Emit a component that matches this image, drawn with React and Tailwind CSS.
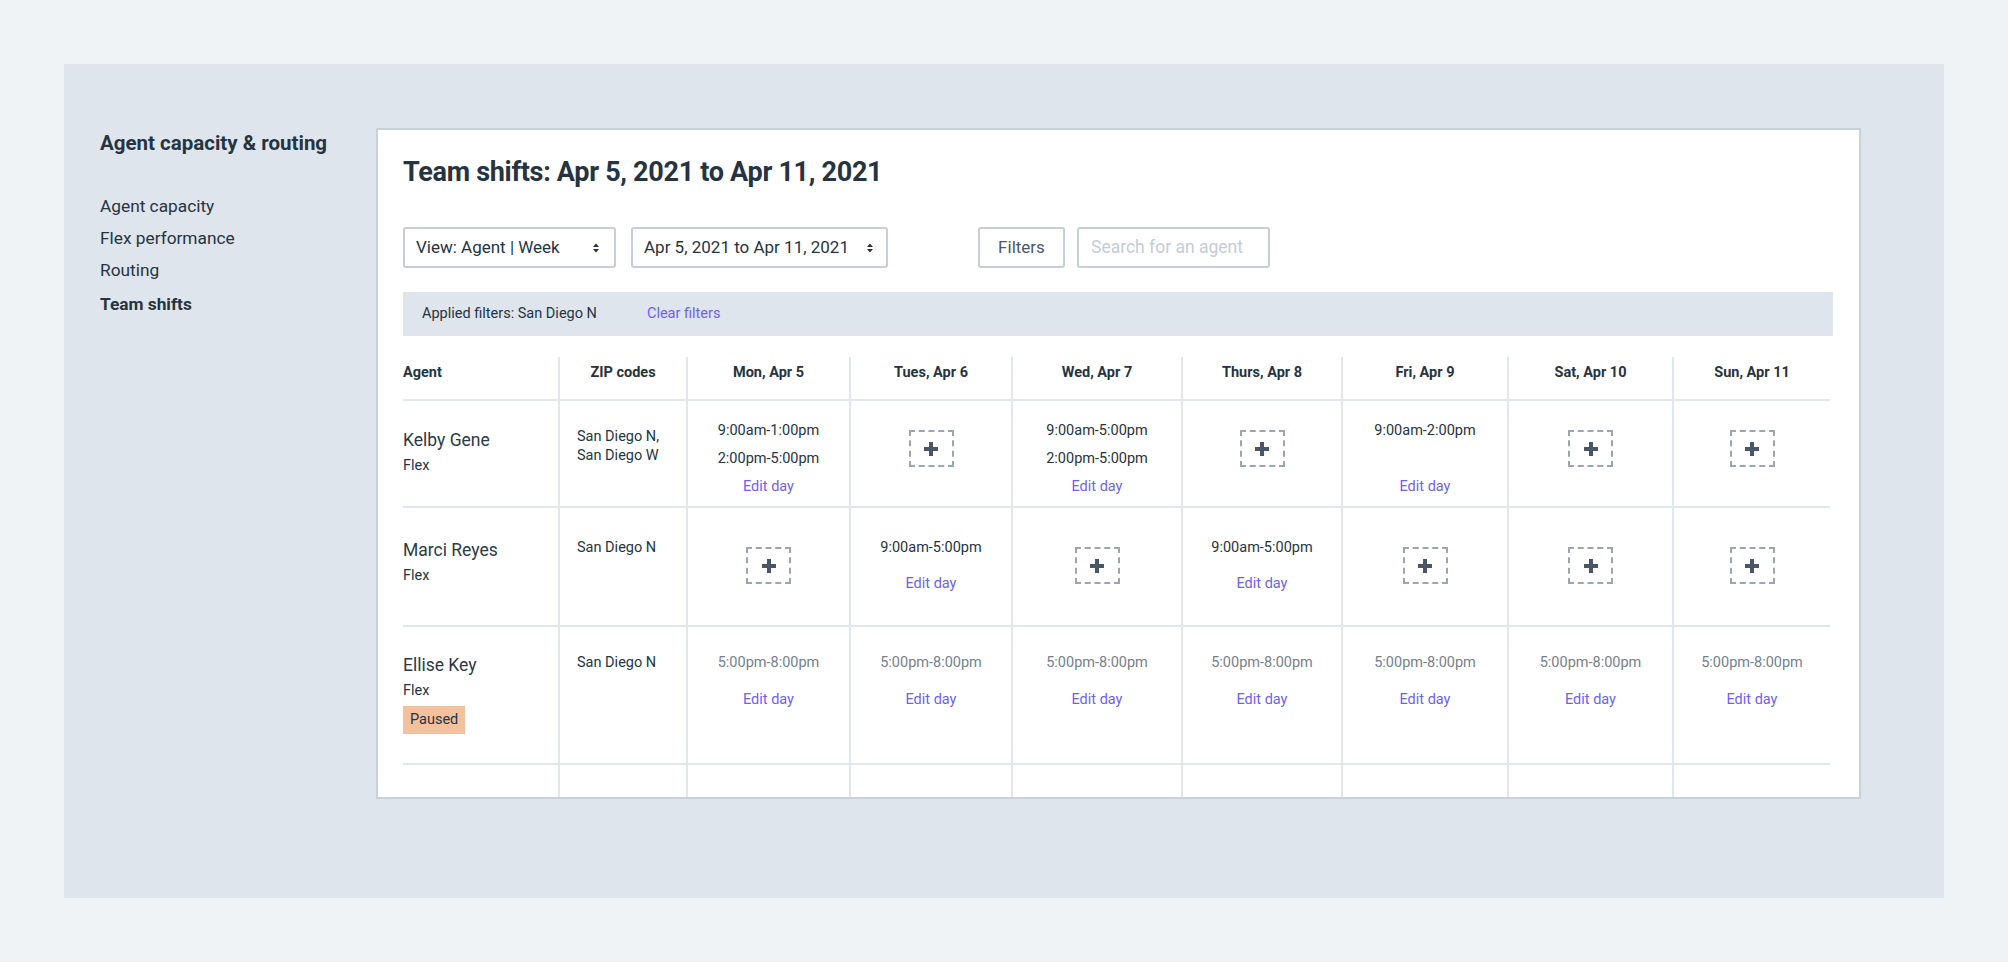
import React from 'react';

const cols = 'grid grid-cols-[155px_128px_163px_162px_170px_160px_166px_165px_158px]';

const days = ['Mon, Apr 5', 'Tues, Apr 6', 'Wed, Apr 7', 'Thurs, Apr 8', 'Fri, Apr 9', 'Sat, Apr 10', 'Sun, Apr 11'];

// each cell: null = empty slot (plus box), otherwise list of shift lines
const rows = [
  {
    name: 'Kelby Gene',
    zips: ['San Diego N,', 'San Diego W'],
    h: 'h-[107px]',
    agentPt: 'pt-[27px]',
    zipPt: 'pt-[26px]',
    dayPt: 'pt-[16px]',
    plusPt: 'pt-[29px]',
    editMt: 'mt-0',
    muted: false,
    cells: [
      ['9:00am-1:00pm', '2:00pm-5:00pm'],
      null,
      ['9:00am-5:00pm', '2:00pm-5:00pm'],
      null,
      ['9:00am-2:00pm', ''],
      null,
      null,
    ],
  },
  {
    name: 'Marci Reyes',
    zips: ['San Diego N'],
    h: 'h-[119px]',
    agentPt: 'pt-[30px]',
    zipPt: 'pt-[30px]',
    dayPt: 'pt-[26px]',
    plusPt: 'pt-[39px]',
    editMt: 'mt-2',
    muted: false,
    cells: [null, ['9:00am-5:00pm'], null, ['9:00am-5:00pm'], null, null, null],
  },
  {
    name: 'Ellise Key',
    zips: ['San Diego N'],
    h: 'h-[138px]',
    agentPt: 'pt-[26px]',
    zipPt: 'pt-[26px]',
    dayPt: 'pt-[22px]',
    plusPt: 'pt-[22px]',
    editMt: 'mt-[9px]',
    muted: true,
    paused: true,
    cells: Array(7).fill(['5:00pm-8:00pm']),
  },
];

function UpDown() {
  return (
    <svg width="8" height="12" viewBox="0 0 8 12" className="shrink-0">
      <path d="M4 1.5 L7 5 H1 Z" fill="#263442" />
      <path d="M4 10.5 L1 7 H7 Z" fill="#263442" />
    </svg>
  );
}

function PlusBox() {
  return (
    <div className="w-[45px] h-[37px] border-2 border-dashed border-[#9ba6b3] flex items-center justify-center">
      <svg width="16" height="16" viewBox="0 0 16 16">
        <rect x="6" y="1" width="4" height="14" fill="#4a5666" />
        <rect x="1" y="6" width="14" height="4" fill="#4a5666" />
      </svg>
    </div>
  );
}

function DayCell({ shifts, row }) {
  if (!shifts) {
    return (
      <div className={`flex justify-center ${row.plusPt}`}>
        <PlusBox />
      </div>
    );
  }
  return (
    <div className={`flex flex-col items-center text-[14.5px] ${row.dayPt}`}>
      {shifts.map((s, i) => (
        <div key={i} className={`leading-[28px] h-[28px] ${row.muted ? 'text-[#76818d]' : 'text-[#263442]'}`}>
          {s}
        </div>
      ))}
      <div className={`leading-[28px] text-[#6e5ff6] ${row.editMt}`}>Edit day</div>
    </div>
  );
}

export default function App() {
  const nav = ['Agent capacity', 'Flex performance', 'Routing'];

  return (
    <div className="min-h-screen bg-[#eff3f6] p-16 font-['Roboto',sans-serif] text-[#263442]">
      <div className="flex bg-[#dfe5ed] pt-16 pb-[99px] pl-9 pr-[86px]">
        {/* Sidebar */}
        <aside className="w-[276px] shrink-0">
          <div className="text-[20.5px] font-bold leading-[28px] mt-px">Agent capacity &amp; routing</div>
          <ul className="mt-[33px] text-[17.3px] leading-[32px]">
            {nav.map((n) => (
              <li key={n}>{n}</li>
            ))}
            <li className="font-bold mt-[2px]">Team shifts</li>
          </ul>
        </aside>

        {/* Card */}
        <section className="flex-1 bg-white border-2 border-[#c8d2dc] pl-[25px] pr-[26px] pt-[26px]">
          <h1 className="text-[27px] font-bold leading-[32px] tracking-[-0.3px]">
            Team shifts: Apr 5, 2021 to Apr 11, 2021
          </h1>

          <div className="flex items-center mt-[39px] h-[41px]">
            <div className="w-[213px] h-full border-2 border-[#c6cfd9] rounded-[3px] flex items-center justify-between pl-[11px] pr-[14px] text-[17px]">
              <span>View: Agent | Week</span>
              <UpDown />
            </div>
            <div className="w-[257px] h-full ml-[15px] border-2 border-[#c6cfd9] rounded-[3px] flex items-center justify-between pl-[11px] pr-[12px] text-[17px]">
              <span>Apr 5, 2021 to Apr 11, 2021</span>
              <UpDown />
            </div>
            <button className="w-[87px] h-full ml-[90px] border-2 border-[#c6cfd9] rounded-[3px] text-[17px] text-[#4b5969]">
              Filters
            </button>
            <div className="w-[193px] h-full ml-[12px] border-2 border-[#c6cfd9] rounded-[3px] flex items-center pl-[12px] text-[17.5px] text-[#c4cdd7]">
              Search for an agent
            </div>
          </div>

          <div className="mt-6 h-[44px] w-[1430px] bg-[#dfe5ed] flex items-center pl-[19px] text-[14.5px]">
            <span>Applied filters: San Diego N</span>
            <span className="ml-[50px] text-[#6e5ff6]">Clear filters</span>
          </div>

          {/* Table */}
          <div className="mt-[21px]">
            <div className={`${cols} h-[44px] text-[14.5px] font-bold leading-[20px]`}>
              <div className="border-b-2 border-[#e1e7ef] pt-[6px]">Agent</div>
              <div className="border-b-2 border-l-2 border-[#e1e7ef] pt-[6px] text-center">ZIP codes</div>
              {days.map((d) => (
                <div key={d} className="border-b-2 border-l-2 border-[#e1e7ef] pt-[6px] text-center">
                  {d}
                </div>
              ))}
            </div>

            {rows.map((row) => (
              <div key={row.name} className={`${cols} ${row.h}`}>
                <div className={`border-b-2 border-[#e1e7ef] ${row.agentPt}`}>
                  <div className="text-[17.5px] leading-[24px] text-[#2c3a48]">{row.name}</div>
                  <div className="text-[14.5px] leading-[20px] mt-1">Flex</div>
                  {row.paused && (
                    <div className="mt-[5px] inline-flex items-center h-[28px] px-[7px] bg-[#f3c19d] text-[14.5px]">
                      Paused
                    </div>
                  )}
                </div>
                <div className={`border-b-2 border-l-2 border-[#e1e7ef] pl-[17px] text-[14.5px] leading-[19px] ${row.zipPt}`}>
                  {row.zips.map((z) => (
                    <div key={z}>{z}</div>
                  ))}
                </div>
                {row.cells.map((c, i) => (
                  <div key={i} className="border-b-2 border-l-2 border-[#e1e7ef]">
                    <DayCell shifts={c} row={row} />
                  </div>
                ))}
              </div>
            ))}

            <div className={`${cols} h-[32px]`}>
              <div />
              {Array.from({ length: 8 }).map((_, i) => (
                <div key={i} className="border-l-2 border-[#e1e7ef]" />
              ))}
            </div>
          </div>
        </section>
      </div>
    </div>
  );
}
